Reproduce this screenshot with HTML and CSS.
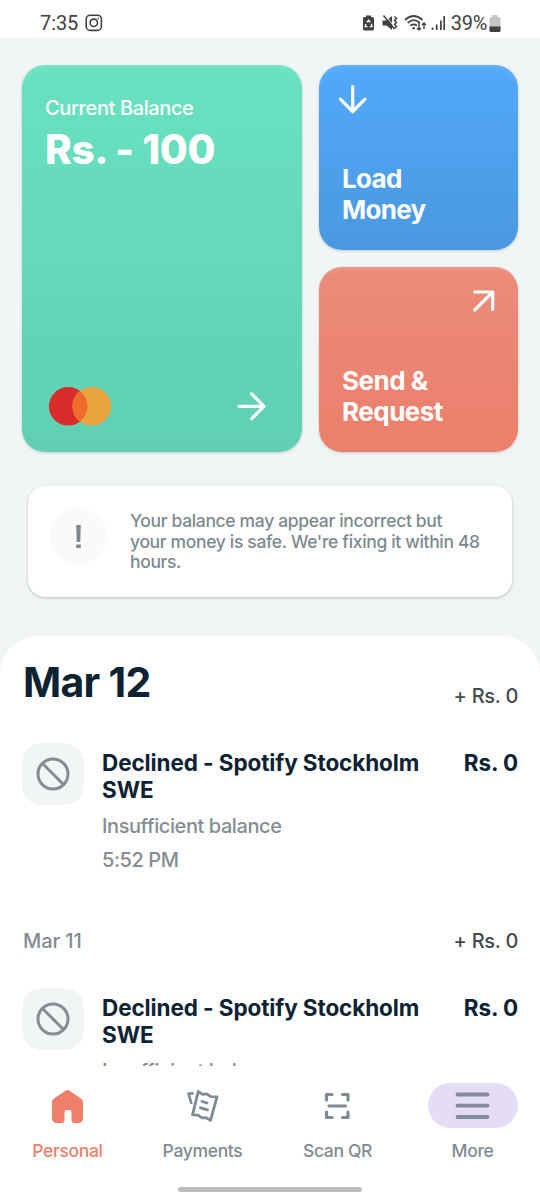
FILE: index.html
```html
<!DOCTYPE html>
<html lang="en">
<head>
<meta charset="utf-8">
<title>Wallet</title>
<link rel="stylesheet" href="styles.css">
</head>
<body>
<div class="phone">
  <header class="status">
    <span class="time">7:35</span>
    <svg class="insta" width="18" height="18" viewBox="0 0 18 18" fill="none" stroke="#414141" stroke-width="1.6"><rect x="1.2" y="1.2" width="15.2" height="15.2" rx="4"/><circle cx="8.8" cy="8.8" r="3.7"/><circle cx="13.1" cy="4.6" r=".5" stroke-width="1"/></svg>
    <div class="indicators">
      <svg width="86" height="20" viewBox="0 0 86 20" class="signals">
        <path fill="#414141" d="M4 1.500h5v1.500h1.500q1.500 0 1.500 1.500v10.500q0 1.500-1.500 1.500h-8q-1.500 0-1.500-1.500v-10.500q0-1.500 1.500-1.500h1.500z"/>
        <path fill="none" stroke="#fff" stroke-width="1.300" d="M4.900 8.300 6.600 6l1.700 2.300M3.900 10l-.8 2.600h2.400M9.300 10l.8 2.600H7.500"/>
        <path fill="#414141" d="M20.500 6.500h4l5.500-4.500v14l-5.500-4.500h-4z"/>
        <path fill="none" stroke="#fff" stroke-width="1" d="m23 .7 8 10.500"/>
        <path fill="none" stroke="#414141" stroke-width="1.500" d="m21.500 1.500 11 13.500M32.500 2.500l2 2-2 2 2 2-2 2 2 2-2 2"/>
        <g fill="none" stroke="#414141" stroke-width="1.700" stroke-linecap="round"><path d="M43.500 5.500q8-7 16.500 0M46.300 8.500q5.400-4.700 11 0M49 11.300q2.700-2 5.400 0"/></g>
        <circle cx="51.700" cy="14.300" r="1.300" fill="#414141"/>
        <path fill="none" stroke="#414141" stroke-width="1.400" d="M57 9v7m-2-2 2 2 2-2M62 15V9m-2 2 2-2 2 2"/>
        <g stroke="#414141" stroke-width="1.700"><path d="M70.500 13.500v2.500M74.700 10.500v5.500M78.900 6.500v9.500M82.200 2v14"/></g>
      </svg>
      <span class="percent">39%</span>
      <svg class="battery" width="12" height="17" viewBox="0 0 12 17"><path fill="#c4c4c4" d="M3.500 0h5v2h1.500q1.500 0 1.500 1.500v12q0 1.500-1.500 1.500h-8q-1.500 0-1.500-1.500v-12q0-1.500 1.500-1.500h1.500z"/><path fill="#414141" d="M.5 11.500h11v4q0 1.500-1.500 1.500h-8q-1.500 0-1.500-1.500z"/></svg>
    </div>
  </header>

  <main class="content">
    <section class="cards">
      <article class="card balance">
        <div class="balance-label">Current Balance</div>
        <div class="balance-value">Rs. - 100</div>
        <div class="balance-foot">
          <svg width="64" height="40" viewBox="0 0 64 40"><circle cx="20.200" cy="20.300" r="19.300" fill="#d92d2c"/><circle cx="43.800" cy="20.300" r="19.300" fill="#eaa440"/><path fill="#ee6b2c" d="M32 5.030a19.300 19.300 0 0 1 0 30.540 19.300 19.300 0 0 1 0-30.540z"/></svg>
          <svg width="30" height="30" viewBox="0 0 30 30" class="line-icon"><path d="M2 15.300h25M14.700 3 27 15.300 14.700 27.600"/></svg>
        </div>
      </article>
      <article class="card load">
        <svg width="30" height="30" viewBox="0 0 30 30" class="line-icon"><path d="M14.700 2.500v25M2.400 15.200l12.300 12.300L27 15.200"/></svg>
        <h2 class="card-title">Load<br>Money</h2>
      </article>
      <article class="card send">
        <svg width="24" height="24" viewBox="0 0 24 24" class="line-icon send-icon"><path d="M2.700 3h18v17.500M20.700 3l-18 18"/></svg>
        <h2 class="card-title">Send &amp;<br>Request</h2>
      </article>
    </section>

    <section class="notice">
      <div class="notice-mark"><svg width="8" height="26" viewBox="0 0 8 26" fill="#7d8990"><path d="M1.200 1h4.600l-.5 17H1.700zM1.200 20.500h4.600v3.500H1.200z"/></svg></div>
      <p class="notice-text">Your balance may appear incorrect but<br>your money is safe. We're fixing it within 48<br>hours.</p>
    </section>

    <section class="sheet">
      <div class="day day-first"><h1 class="day-title">Mar 12</h1><span class="day-total">+ Rs. 0</span></div>
      <div class="entry">
        <div class="entry-icon"><svg width="34" height="34" viewBox="0 0 34 34" class="ban"><circle cx="17" cy="17" r="15"/><path d="m6.500 6.500 21 21"/></svg></div>
        <div class="entry-body"><h3 class="entry-title">Declined - Spotify Stockholm<br>SWE</h3><p class="entry-note">Insufficient balance</p><p class="entry-note">5:52 PM</p></div>
        <div class="entry-amount">Rs. 0</div>
      </div>
      <div class="day day-next"><span class="day-small">Mar 11</span><span class="day-total">+ Rs. 0</span></div>
      <div class="entry">
        <div class="entry-icon"><svg width="34" height="34" viewBox="0 0 34 34" class="ban"><circle cx="17" cy="17" r="15"/><path d="m6.500 6.500 21 21"/></svg></div>
        <div class="entry-body"><h3 class="entry-title">Declined - Spotify Stockholm<br>SWE</h3><p class="entry-note">Insufficient balance</p></div>
        <div class="entry-amount">Rs. 0</div>
      </div>
    </section>
  </main>

  <nav class="tabs">
    <div class="tab active"><div class="tab-icon"><svg width="36" height="36" viewBox="0 0 36 36" fill="#ef7f6b"><path d="M15.500 2.700q2-1.300 4 0L31 10.500q2 1.500 2 3.500v16q0 5-5 5h-3.500q-3 0-3-3V24q0-2-2-2h-3q-2 0-2 2v8q0 3-3 3H7q-5 0-5-5V14q0-2 2-3.500z"/></svg></div><span>Personal</span></div>
    <div class="tab"><div class="tab-icon"><svg width="36" height="36" viewBox="0 0 36 36" fill="none" stroke="#7f8b92" stroke-width="2.800" stroke-linejoin="round"><path d="m13.200 3.500 4.200 2.800 4.300-.5 4 2.800 6.300.3-6.500 23.400-4.500-2.600-4 .2-4-2.700-5.500-.3z"/><path d="M17 13.500 22 15M15.500 19.800l7 2" stroke-linecap="round"/><path d="M8.700 5.500H3.500L6.500 16" stroke-width="2.600"/></svg></div><span>Payments</span></div>
    <div class="tab"><div class="tab-icon"><svg width="30" height="30" viewBox="0 0 30 30" fill="none" stroke="#7f8b92" stroke-width="3.200" stroke-linejoin="round"><path stroke-linecap="round" d="M3.500 9V3.500H9M19.500 3.500H25V9M3.500 21v5.500H9M19.500 26.500H25V21M6 15h16.500"/></svg></div><span>Scan QR</span></div>
    <div class="tab"><div class="tab-icon pill"><svg width="36" height="30" viewBox="0 0 36 30" stroke="#848b9b" stroke-width="3.800" stroke-linecap="round"><path d="M2.500 3.500h30M2.500 14.700h30M2.500 26h30"/></svg></div><span>More</span></div>
    <div class="home-bar"></div>
  </nav>
</div>
</body>
</html>
```
FILE: styles.css
```css
* { box-sizing: border-box; }
body, h1, h2, h3, p { margin: 0; }
svg { display: block; flex: none; }

.phone {
  width: 540px;
  height: 1200px;
  display: flex;
  flex-direction: column;
  overflow: hidden;
  background: #f1f5f6;
  font-family: Inter, "Liberation Sans", sans-serif;
}

.status {
  flex: none;
  height: 37px;
  padding: 9px 39px 0 40px;
  display: flex;
  align-items: flex-start;
  background: #fff;
  color: #414141;
  font-family: Roboto, sans-serif;
}
.time { font-size: 20px; line-height: 28px; font-weight: 450; letter-spacing: -.1px; }
.insta { margin: 5px 0 0 7px; }
.indicators { margin-left: auto; display: flex; }
.signals { margin: 5px 3px 0 0; }
.percent { font-size: 20px; line-height: 28px; font-weight: 450; letter-spacing: -.3px; white-space: nowrap; }
.battery { margin: 6px 0 0 2px; }

.content {
  flex: 1;
  min-height: 0;
  overflow: hidden;
  padding-top: 28px;
  display: flex;
  flex-direction: column;
}

.cards {
  flex: none;
  height: 387px;
  margin: 0 22px;
  display: grid;
  grid-template-columns: 280px 199px;
  grid-template-rows: 185px 185px;
  gap: 17px;
}
.card {
  border-radius: 23px;
  color: #fff;
  display: flex;
  flex-direction: column;
  box-shadow: 0 1px 3px rgba(30, 50, 60, .22), inset 0 7px 6px -5px rgba(255, 255, 255, .14);
}
.balance {
  grid-row: 1 / 3;
  padding: 30px 35px 26px 23px;
  background: linear-gradient(#69e2c1, #60cfb2);
}
.balance-label { font-size: 20px; line-height: 26px; font-weight: 450; letter-spacing: -.38px; }
.balance-value { font-size: 40.5px; line-height: 50px; margin-top: 4px; font-weight: 800; letter-spacing: -.35px; white-space: nowrap; }
.balance-foot { margin-top: auto; padding-left: 3px; display: flex; justify-content: space-between; align-items: center; }
.load { padding: 19px 19px 25px; background: linear-gradient(#52a9fa, #4a98df); }
.send { padding: 22px 22px 25px; background: linear-gradient(#eb8b79, #eb7f6b); }
.send-icon { align-self: flex-end; }
.card-title { margin-top: auto; font-size: 26px; line-height: 30.5px; font-weight: 700; letter-spacing: -.7px; }
.load .card-title { padding-left: 4px; }
.send .card-title { padding-left: 1px; letter-spacing: -.5px; }
.line-icon { fill: none; stroke: #fff; stroke-width: 3.2; stroke-linecap: round; stroke-linejoin: round; }

.notice {
  flex: none;
  height: 111px;
  margin: 34px 28px 0;
  padding: 22px 22px;
  display: flex;
  gap: 23px;
  background: #fff;
  border-radius: 17px;
  box-shadow: 0 1px 3px rgba(30, 40, 50, .28);
}
.notice-mark { flex: none; width: 57px; height: 57px; border-radius: 50%; background: #fafafa; display: flex; align-items: center; justify-content: center; }
.notice-text { margin-top: 3px; color: #7d8990; font-size: 17.5px; line-height: 20.5px; font-weight: 450; letter-spacing: -.34px; white-space: nowrap; }

.sheet {
  flex: 1;
  min-height: 0;
  margin-top: 39px;
  padding: 0 22px;
  background: #fff;
  border-radius: 38px 38px 0 0;
  overflow: hidden;
}
.day { display: flex; justify-content: space-between; }
.day-first { height: 107px; padding-top: 21px; }
.day-next { height: 114px; padding-top: 53px; }
.day-title { padding-left: 1px; font-size: 41px; line-height: 50px; font-weight: 700; letter-spacing: -.7px; color: #0d2233; }
.day-total { font-size: 20px; line-height: 26px; font-weight: 450; letter-spacing: -.3px; color: #45494d; }
.day-first .day-total { margin-top: 26px; }
.day-next .day-total, .day-small { margin-top: 1px; }
.day-small { font-size: 20px; line-height: 26px; padding-left: 1px; font-weight: 450; letter-spacing: -.1px; color: #838b92; }
.entry { height: 131px; display: flex; }
.entry-icon { flex: none; width: 62px; height: 62px; border-radius: 20px; background: #f2f5f6; display: flex; align-items: center; justify-content: center; }
.ban { fill: none; stroke: #858d92; stroke-width: 3; }
.entry-body { margin: 6px 0 0 18px; }
.entry-title { font-size: 22.5px; line-height: 27px; font-weight: 650; letter-spacing: -.1px; color: #0d2233; white-space: nowrap; }
.entry-note { margin-top: 11px; font-size: 20px; line-height: 25px; font-weight: 450; letter-spacing: -.42px; color: #858d92; }
.entry-note + .entry-note { margin-top: 9px; }
.entry-amount { margin: 6px 0 0 auto; font-size: 22.5px; line-height: 27px; font-weight: 650; letter-spacing: -.1px; color: #0d2233; }

.tabs {
  flex: none;
  height: 134px;
  padding-top: 17px;
  background: #fff;
  display: grid;
  grid-template-columns: repeat(4, 1fr);
  grid-template-rows: 104px 6px;
}
.tab { display: flex; flex-direction: column; align-items: center; color: #7f8b92; font-size: 17.5px; line-height: 24px; font-weight: 450; letter-spacing: -.33px; }
.tab span { margin-top: 11px; }
.tab-icon { width: 90px; height: 45px; display: flex; align-items: center; justify-content: center; }
.pill { border-radius: 23px; background: #e5dcf5; }
.active { color: #ef7f6b; }
.home-bar { grid-column: 1 / 5; justify-self: center; width: 184px; height: 5px; border-radius: 3px; background: #bcbcbc; }
```
